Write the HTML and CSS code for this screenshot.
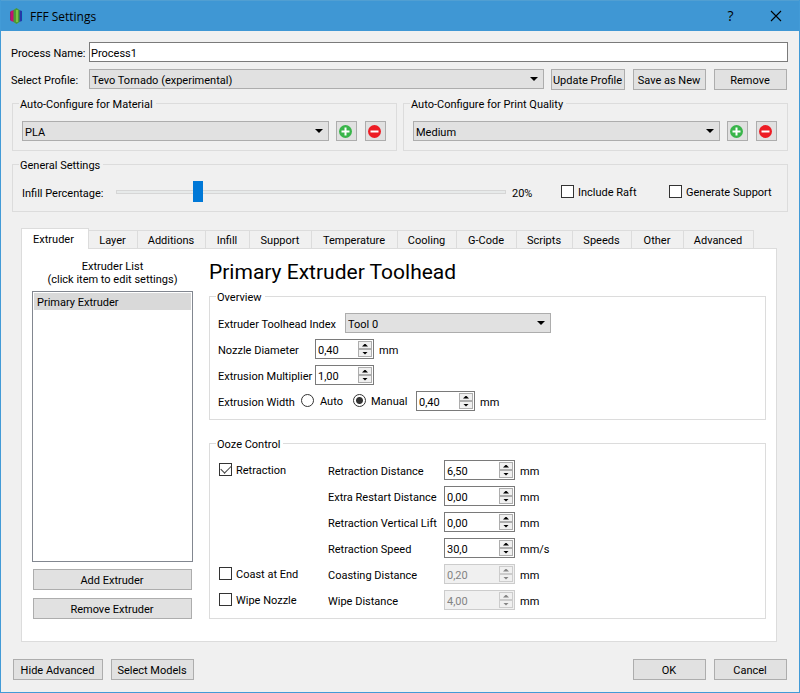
FILE: index.html
```html
<!DOCTYPE html>
<html lang="en">
<head>
<meta charset="utf-8">
<title>FFF Settings</title>
<link rel="stylesheet" href="styles.css">
</head>
<body>
<svg class="defs" width="0" height="0" aria-hidden="true">
  <symbol id="plus" viewBox="0 0 13 13"><circle cx="6.500" cy="6.500" r="6.500" fill="#39b54a"/><path d="M6.500 2.500v8M2.500 6.500h8" stroke="#fff" stroke-width="2"/></symbol>
  <symbol id="minus" viewBox="0 0 13 13"><circle cx="6.500" cy="6.500" r="6.500" fill="#ed1c24"/><path d="M2.500 6.500h8" stroke="#fff" stroke-width="2"/></symbol>
</svg>
<div class="window">
  <header class="titlebar">
    <svg class="logo" viewBox="0 0 15 16" width="15" height="16" aria-hidden="true">
      <path d="M2 3L5 2v12L2 13z" fill="#c4106f"/><path d="M1 4v8l1 1V3z" fill="#8a2570"/>
      <path d="M10 2L13 3v10L10 14z" fill="#2439a8"/><path d="M13 3l1 1v8l-1 1z" fill="#2a9fd0"/>
      <path d="M7.500 0L10.500 2v12L7.500 16 4.500 14V2z" fill="#4a9a35"/><path d="M7 2h2v12H7z" fill="#7cc243"/>
    </svg>
    <h1 class="title">FFF Settings</h1>
    <button class="caption" type="button">?</button>
    <button class="caption" type="button" aria-label="Close"><svg viewBox="0 0 12 12" width="12" height="12"><path d="M1 1l10 10M11 1L1 11" stroke="#000" stroke-width="1.100"/></svg></button>
  </header>

  <main class="content">
    <div class="row name-row">
      <label class="head-label" for="name">Process Name:</label>
      <input class="text" id="name" type="text" value="Process1">
    </div>
    <div class="row profile-row">
      <label class="head-label" for="profile">Select Profile:</label>
      <span class="select"><select id="profile"><option>Tevo Tornado (experimental)</option></select></span>
      <div class="actions">
        <button class="btn" type="button">Update Profile</button>
        <button class="btn" type="button">Save as New</button>
        <button class="btn" type="button">Remove</button>
      </div>
    </div>

    <div class="pair">
      <fieldset class="group">
        <legend>Auto-Configure for Material</legend>
        <div class="row auto">
          <span class="select"><select aria-label="Material"><option>PLA</option></select></span>
          <button class="btn icon" type="button" aria-label="Add material"><svg width="13" height="13"><use href="#plus"/></svg></button>
          <button class="btn icon" type="button" aria-label="Remove material"><svg width="13" height="13"><use href="#minus"/></svg></button>
        </div>
      </fieldset>
      <fieldset class="group">
        <legend>Auto-Configure for Print Quality</legend>
        <div class="row auto">
          <span class="select"><select aria-label="Print quality"><option>Medium</option></select></span>
          <button class="btn icon" type="button" aria-label="Add quality"><svg width="13" height="13"><use href="#plus"/></svg></button>
          <button class="btn icon" type="button" aria-label="Remove quality"><svg width="13" height="13"><use href="#minus"/></svg></button>
        </div>
      </fieldset>
    </div>

    <fieldset class="group general-group">
      <legend>General Settings</legend>
      <div class="row general">
        <label class="infill-label" for="infill">Infill Percentage:</label>
        <input class="slider" id="infill" type="range" min="0" max="100" value="20">
        <output class="percent" for="infill">20%</output>
        <label class="check raft"><input type="checkbox">Include Raft</label>
        <label class="check support"><input type="checkbox">Generate Support</label>
      </div>
    </fieldset>

    <section class="tabs">
      <div class="tablist" role="tablist">
        <button class="tab active" role="tab" aria-selected="true" type="button">Extruder</button>
        <button class="tab" role="tab" type="button">Layer</button>
        <button class="tab" role="tab" type="button">Additions</button>
        <button class="tab" role="tab" type="button">Infill</button>
        <button class="tab" role="tab" type="button">Support</button>
        <button class="tab" role="tab" type="button">Temperature</button>
        <button class="tab" role="tab" type="button">Cooling</button>
        <button class="tab" role="tab" type="button">G-Code</button>
        <button class="tab" role="tab" type="button">Scripts</button>
        <button class="tab" role="tab" type="button">Speeds</button>
        <button class="tab" role="tab" type="button">Other</button>
        <button class="tab" role="tab" type="button">Advanced</button>
      </div>
      <div class="panel" role="tabpanel">
        <div class="side">
          <div class="list-title"><p>Extruder List</p><p>(click item to edit settings)</p></div>
          <ul class="list"><li class="item">Primary Extruder</li></ul>
          <button class="btn" type="button">Add Extruder</button>
          <button class="btn" type="button">Remove Extruder</button>
        </div>
        <div class="detail">
          <h2 class="heading">Primary Extruder Toolhead</h2>
          <fieldset class="group form overview">
            <legend>Overview</legend>
            <div class="row"><label class="w-index" for="tool">Extruder Toolhead Index</label><span class="select tool"><select id="tool"><option>Tool 0</option></select></span></div>
            <div class="row"><label class="w-label" for="nozzle">Nozzle Diameter</label>
              <span class="spin narrow"><input id="nozzle" type="text" value="0,40"><span class="steps"><button type="button" aria-label="Increase"></button><button type="button" aria-label="Decrease"></button></span></span><span class="unit">mm</span></div>
            <div class="row"><label class="w-label" for="mult">Extrusion Multiplier</label>
              <span class="spin narrow"><input id="mult" type="text" value="1,00"><span class="steps"><button type="button" aria-label="Increase"></button><button type="button" aria-label="Decrease"></button></span></span></div>
            <div class="row"><label class="w-width" for="width">Extrusion Width</label>
              <label class="check auto-radio"><input type="radio" name="width">Auto</label>
              <label class="check manual-radio"><input type="radio" name="width" checked>Manual</label>
              <span class="spin narrow"><input id="width" type="text" value="0,40"><span class="steps"><button type="button" aria-label="Increase"></button><button type="button" aria-label="Decrease"></button></span></span><span class="unit">mm</span></div>
          </fieldset>
          <fieldset class="group form">
            <legend>Ooze Control</legend>
            <div class="row"><div class="w-check"><label class="check"><input type="checkbox" checked>Retraction</label></div><label class="w-ooze" for="dist">Retraction Distance</label>
              <span class="spin"><input id="dist" type="text" value="6,50"><span class="steps"><button type="button" aria-label="Increase"></button><button type="button" aria-label="Decrease"></button></span></span><span class="unit">mm</span></div>
            <div class="row"><div class="w-check"></div><label class="w-ooze" for="extra">Extra Restart Distance</label>
              <span class="spin"><input id="extra" type="text" value="0,00"><span class="steps"><button type="button" aria-label="Increase"></button><button type="button" aria-label="Decrease"></button></span></span><span class="unit">mm</span></div>
            <div class="row"><div class="w-check"></div><label class="w-ooze" for="lift">Retraction Vertical Lift</label>
              <span class="spin"><input id="lift" type="text" value="0,00"><span class="steps"><button type="button" aria-label="Increase"></button><button type="button" aria-label="Decrease"></button></span></span><span class="unit">mm</span></div>
            <div class="row"><div class="w-check"></div><label class="w-ooze" for="speed">Retraction Speed</label>
              <span class="spin"><input id="speed" type="text" value="30,0"><span class="steps"><button type="button" aria-label="Increase"></button><button type="button" aria-label="Decrease"></button></span></span><span class="unit">mm/s</span></div>
            <div class="row"><div class="w-check"><label class="check"><input type="checkbox">Coast at End</label></div><label class="w-ooze" for="coast">Coasting Distance</label>
              <span class="spin off"><input id="coast" type="text" value="0,20" disabled><span class="steps"><button type="button" aria-label="Increase" disabled></button><button type="button" aria-label="Decrease" disabled></button></span></span><span class="unit">mm</span></div>
            <div class="row"><div class="w-check"><label class="check"><input type="checkbox">Wipe Nozzle</label></div><label class="w-ooze" for="wipe">Wipe Distance</label>
              <span class="spin off"><input id="wipe" type="text" value="4,00" disabled><span class="steps"><button type="button" aria-label="Increase" disabled></button><button type="button" aria-label="Decrease" disabled></button></span></span><span class="unit">mm</span></div>
          </fieldset>
        </div>
      </div>
    </section>

    <footer class="footer">
      <button class="btn hide" type="button">Hide Advanced</button>
      <button class="btn models" type="button">Select Models</button>
      <span class="spacer"></span>
      <button class="btn" type="button">OK</button>
      <button class="btn" type="button">Cancel</button>
    </footer>
  </main>
</div>
</body>
</html>
```
FILE: styles.css
```css
* { box-sizing: border-box; }
body { margin: 0; color: #000; font: 11px/14px Roboto, "Open Sans", sans-serif; }
button, input, select { font: inherit; color: inherit; margin: 0; }
.defs { position: absolute; }
h1, h2, p, ul { margin: 0; padding: 0; font-weight: normal; }
ul { list-style: none; }
label, legend, button, .unit { white-space: nowrap; }

.window { display: flex; flex-direction: column; min-height: 100vh; background: #f0f0f0; border: 1px solid #429bd7; border-top: 0; }
.titlebar { display: flex; align-items: center; height: 31px; padding-left: 8px; background: #3f97d4; border-top: 1px solid #519fd2; }
.logo { margin-right: 6px; }
.title { flex: 1; padding-top: 1px; font: 12px/16px "Open Sans", sans-serif; }
.caption { width: 45px; height: 30px; padding: 0 2px 0 0; border: 0; background: none; font: 14px/16px "Open Sans", sans-serif; display: grid; place-items: center; }

.content { flex: 1; display: flex; flex-direction: column; padding: 11px 11px 12px; }
.row { display: flex; align-items: center; }
.head-label { width: 78px; margin-left: -1px; padding-top: 4px; }
.name-row { height: 20px; margin-bottom: 7px; }
.text { flex: 1; min-width: 0; height: 20px; padding: 3px 1px 0; border: 1px solid #7a7a7a; background: #fff; }
.profile-row { align-items: flex-start; height: 21px; margin-bottom: 6px; }
.profile-row .head-label { padding-top: 5px; }

.select { position: relative; display: flex; flex: 1; min-width: 0; height: 20px; }
.select select { width: 100%; appearance: none; padding: 3px 18px 0 2px; border: 1px solid #adadad; border-radius: 0; background: #e1e1e1; }
.select::after { content: ""; position: absolute; right: 6px; top: 8px; width: 8px; height: 4px; background: #000; clip-path: polygon(0 0, 100% 0, 50% 100%); pointer-events: none; }

.btn { height: 21px; padding: 3px 1px 0 0; border: 1px solid #adadad; background: #e1e1e1; text-align: center; }
.actions { display: grid; grid-template-columns: 74px 73px 73px; gap: 8px; margin: 0 1px 0 7px; }
.icon { width: 21px; height: 20px; padding: 0 2px 0 0; display: grid; place-items: center; margin-left: 8px; }
.select + .icon { margin-left: 7px; }

.pair { display: grid; grid-template-columns: 1fr 1fr; gap: 6px; margin-bottom: 6px; }
.group { min-width: 0; margin: 0; padding: 9px 9px 8px; border: 1px solid #dcdcdc; }
.group legend { height: 15px; line-height: 18px; margin-left: -3px; padding: 0 3px 0 1px; }
.pair .group { padding: 10px 10px 9px 9px; }
.general-group { padding: 9px; }

.general { height: 21px; }
.infill-label { flex: none; width: 94px; padding-top: 4px; }
.slider { flex: 1; min-width: 0; height: 21px; appearance: none; background: none; }
.slider::-webkit-slider-runnable-track { height: 4px; border: 1px solid #d6d6d6; background: #e7eaea; }
.slider::-webkit-slider-thumb { appearance: none; width: 10px; height: 21px; margin-top: -10px; background: #0078d7; }
.percent { flex: none; width: 55px; padding: 4px 0 0 6px; }
.check { display: flex; align-items: center; gap: 4px; padding-top: 2px; }
.check input { appearance: none; flex: none; width: 13px; height: 13px; margin-bottom: 3px; border: 1px solid #333; background: #fff; }
.check input[type="checkbox"]:checked::before { content: ""; display: block; width: 9px; height: 5px; margin: 2px 1px; border: solid #444; border-width: 0 0 1px 1px; transform: rotate(-45deg); }
.check input[type="checkbox"]:checked { display: grid; align-items: start; }
.check input[type="checkbox"]:checked::before { margin-top: 1px; }
.check input[type="radio"] { border-radius: 50%; }
.check input[type="radio"]:checked { background: radial-gradient(circle, #333 3px, #fff 4px); }
.raft { flex: none; width: 108px; }
.support { flex: none; width: 109px; }

.tabs { flex: 1; display: flex; flex-direction: column; margin: 16px 11px 17px 9px; }
.tablist { display: grid; grid-template-columns: 68px 49px 68px 44px 62px 86px 59px 60px 56px 59px 52px 70px; align-items: end; height: 20px; }
.tab { height: 18px; padding: 3px 1px 0 0; border: 1px solid #dcdcdc; border-width: 1px 1px 0 0; background: #f0f0f0; }
.tab.active { height: 21px; margin: 0 0 -1px; padding: 2px 3px 0 0; border-left-width: 1px; background: #fff; position: relative; }
.panel { flex: 1; display: grid; grid-template-columns: 161px 1fr; gap: 16px; padding: 10px 10px 22px; border: 1px solid #dcdcdc; background: #fff; }
.side { display: flex; flex-direction: column; gap: 8px; }
.list-title { line-height: 13px; text-align: center; padding-top: 1px; margin-bottom: -3px; }
.list { flex: 1; padding: 1px; border: 1px solid #828790; margin-bottom: -1px; }
.item { padding: 0 3px; height: 17px; background: #d9d9d9; line-height: 19px; }
.side .btn { margin: 0 1px; }
.heading { font-size: 21px; line-height: 26px; margin-bottom: 4px; }
.overview { margin-bottom: 16px; }

.form { display: flex; flex-direction: column; gap: 6px; padding-left: 8px; }
.form .row { height: 20px; }
.form .row > label:not(.check), .unit { padding-top: 4px; }
.form legend { margin-left: -2px; }
.w-index { width: 127px; }
.w-label { width: 97px; }
.w-width { width: 83px; }
.auto-radio { width: 52px; gap: 6px; }
.manual-radio { width: 63px; gap: 5px; }
.w-check { width: 110px; padding-left: 1px; }
.w-ooze { width: 116px; }
.select.tool { flex: 0 0 206px; }
.spin { display: flex; width: 71px; height: 20px; padding: 1px; border: 1px solid #7a7a7a; background: #fff; }
.spin.narrow { width: 59px; }
.spin input { flex: 1; min-width: 0; padding: 3px 0 0 1px; border: 0; background: none; }
.steps { display: grid; grid-template-rows: 8px 8px; width: 14px; }
.steps button { padding: 0; border: 1px solid #adadad; background: #f0f0f0; display: grid; place-items: center; }
.steps button::before { content: ""; width: 6px; height: 3px; background: #000; clip-path: polygon(50% 0, 100% 100%, 0 100%); }
.steps button + button::before { clip-path: polygon(0 0, 100% 0, 50% 100%); }
.spin.off { background: #f0f0f0; border-color: #ccc; color: #838383; }
.off .steps button { border-color: #ccc; }
.off .steps button::before { background: #838383; }
.unit { margin-left: 5px; }

.footer { display: flex; gap: 8px; padding: 0 1px; }
.footer .btn { width: 73px; }
.footer .hide { width: 90px; }
.footer .models { width: 83px; }
.spacer { flex: 1; }
```
